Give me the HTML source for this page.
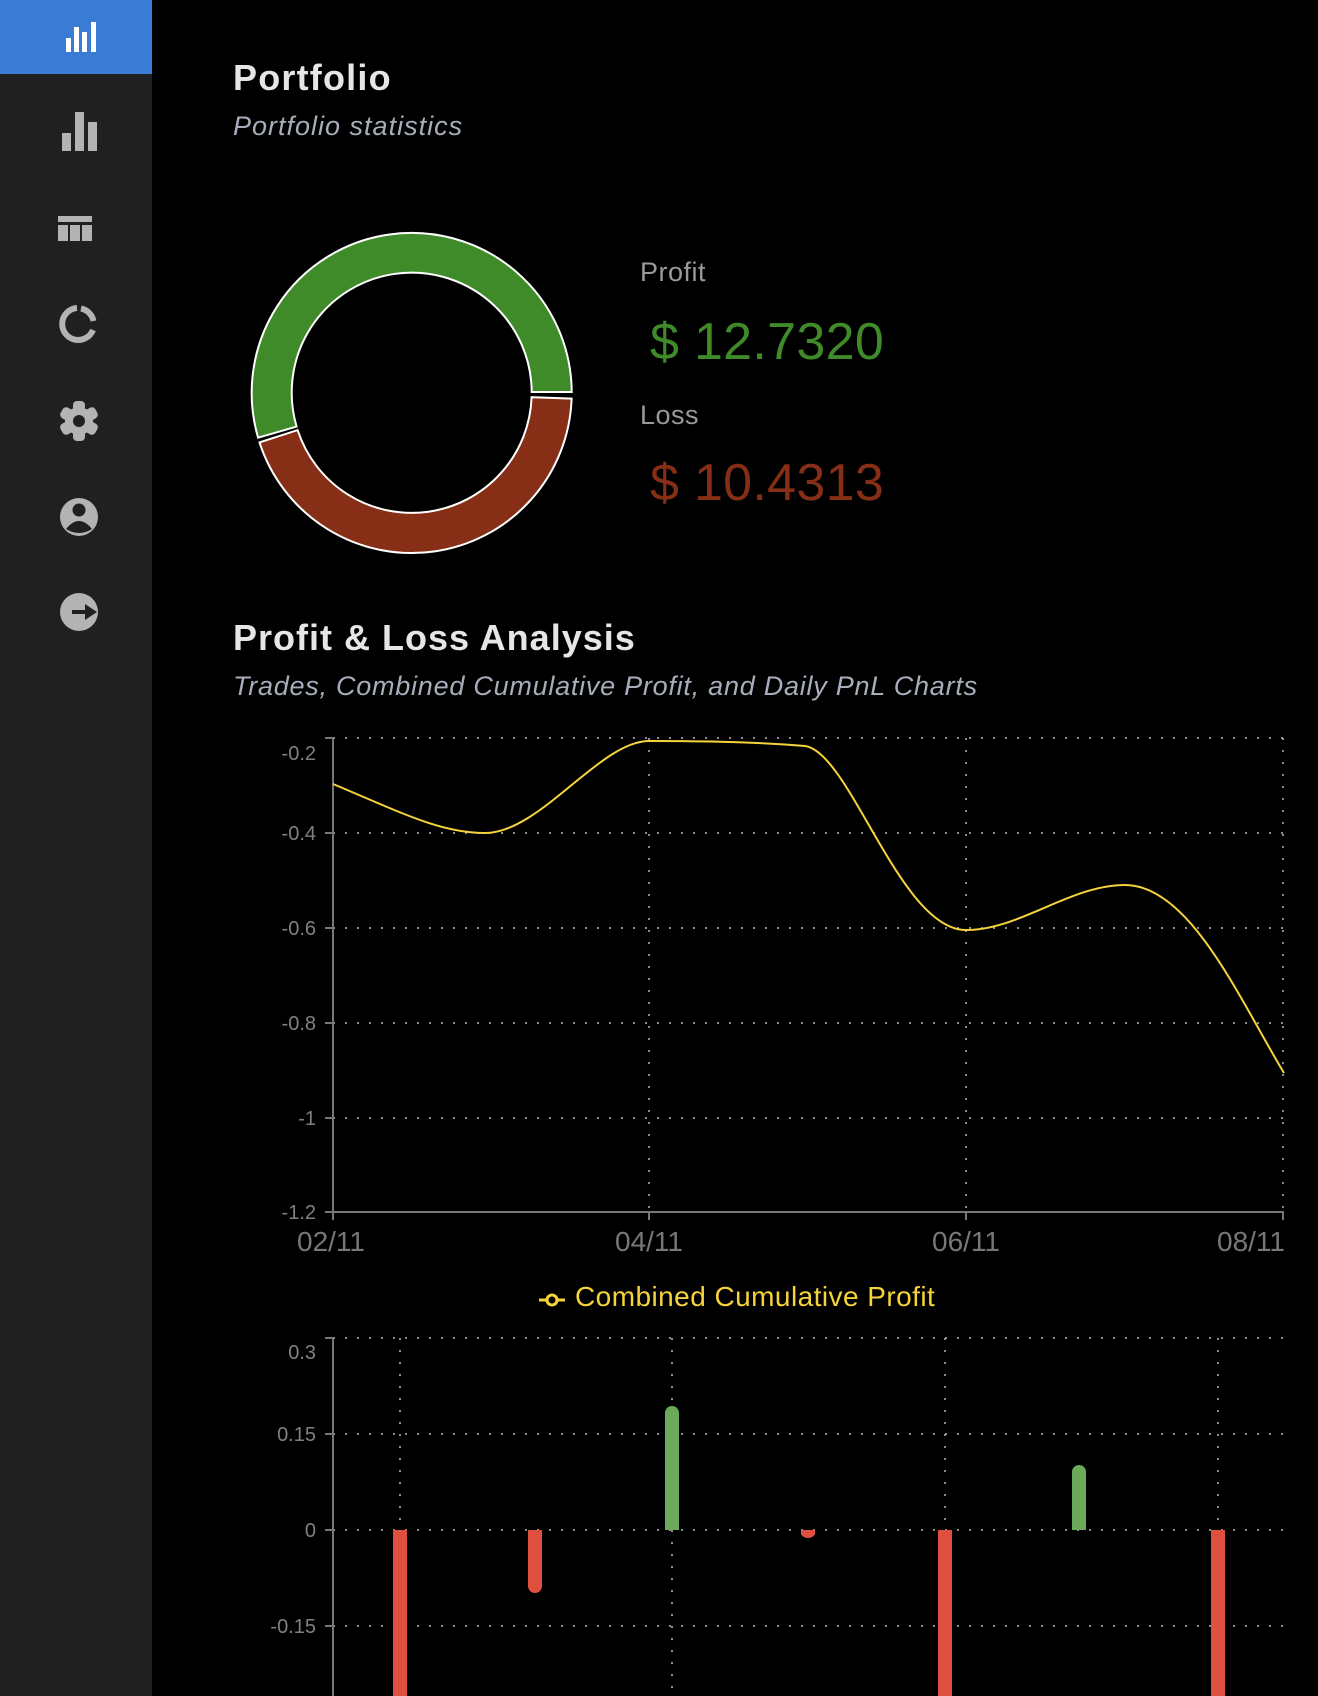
<!DOCTYPE html>
<html><head><meta charset="utf-8"><style>
html,body{margin:0;padding:0;background:#000;width:1318px;height:1696px;overflow:hidden;font-family:"Liberation Sans",sans-serif}
.sb{position:absolute;left:0;top:0;width:152px;height:1696px;background:#202020}
.act{position:absolute;left:0;top:0;width:152px;height:74px;background:#3a7bd5}
.t{position:absolute;white-space:nowrap}
</style></head><body>
<div class="sb"><div class="act"></div>
<svg width="152" height="700" style="position:absolute;left:0;top:0">
 <g fill="#fff"><rect x="66" y="38" width="5" height="14"/><rect x="74" y="27" width="5" height="25"/><rect x="82" y="32" width="5" height="20"/><rect x="91" y="22" width="5" height="30"/></g>
 <g fill="#b3b3b3">
  <rect x="62" y="133" width="9" height="18"/><rect x="75" y="112" width="9" height="39"/><rect x="88" y="122" width="9" height="29"/>
  <rect x="58" y="216" width="34" height="6"/><rect x="58" y="225" width="10" height="16"/><rect x="70" y="225" width="10" height="16"/><rect x="82" y="225" width="10" height="16"/>
 </g>
 <g fill="none" stroke="#b3b3b3" stroke-width="6">
  <path d="M77 308 A16 16 0 1 0 93 330"/><path d="M81 308.5 A16 16 0 0 1 93.5 321"/>
 </g>
 <g fill="#b3b3b3">
  <g transform="translate(79 421)">
   <circle r="14"/>
   <rect x="-6" y="-20" width="12" height="40" rx="4"/>
   <rect x="-6" y="-20" width="12" height="40" rx="4" transform="rotate(60)"/>
   <rect x="-6" y="-20" width="12" height="40" rx="4" transform="rotate(120)"/>
   <circle r="6" fill="#202020"/>
  </g>
  <circle cx="79" cy="517" r="19"/><circle cx="79" cy="510" r="6.5" fill="#202020"/><path d="M66 529 Q79 513 92 529 Q79 537 66 529 Z" fill="#202020"/>
  <circle cx="79" cy="612" r="19"/><rect x="72" y="610" width="14" height="4" fill="#202020"/><path d="M85 604 L97 612 L85 620 Z" fill="#202020"/>
 </g>
</svg></div>

<div class="t" style="left:233px;top:57px;font-size:36px;font-weight:bold;color:#e6e6e6;letter-spacing:1.2px">Portfolio</div>
<div class="t" style="left:233px;top:111px;font-size:27px;font-style:italic;color:#a8adbb;letter-spacing:1px">Portfolio statistics</div>
<div class="t" style="left:640px;top:257px;font-size:27px;color:#9a9a9a;letter-spacing:0.5px">Profit</div>
<div class="t" style="left:650px;top:312px;font-size:52px;color:#3f8a29;letter-spacing:0.3px">$ 12.7320</div>
<div class="t" style="left:640px;top:400px;font-size:27px;color:#9a9a9a;letter-spacing:0.5px">Loss</div>
<div class="t" style="left:650px;top:453px;font-size:52px;color:#862e16;letter-spacing:0.3px">$ 10.4313</div>
<div class="t" style="left:233px;top:617px;font-size:36px;font-weight:bold;color:#e6e6e6;letter-spacing:1px">Profit &amp; Loss Analysis</div>
<div class="t" style="left:233px;top:671px;font-size:27px;font-style:italic;color:#a8adbb;letter-spacing:0.75px">Trades, Combined Cumulative Profit, and Daily PnL Charts</div>

<svg width="1318" height="1696" style="position:absolute;left:0;top:0;pointer-events:none">
 <path d="M571.7 392 A160 160 0 1 0 258.1 437.7 L296.6 426.6 A120 120 0 1 1 531.7 392 Z" fill="#3f8a29" stroke="#fff" stroke-width="2"/>
 <path d="M571.6 398.6 A160 160 0 0 1 259.5 442.4 L297.6 430.1 A120 120 0 0 0 531.6 397.2 Z" fill="#862e16" stroke="#fff" stroke-width="2"/>

 <g stroke="#bbb" stroke-width="1.5" stroke-dasharray="2 10">
  <line x1="333" y1="738" x2="1284" y2="738"/><line x1="333" y1="833" x2="1284" y2="833"/><line x1="333" y1="928" x2="1284" y2="928"/>
  <line x1="333" y1="1023" x2="1284" y2="1023"/><line x1="333" y1="1118" x2="1284" y2="1118"/>
  <line x1="649" y1="738" x2="649" y2="1212"/><line x1="966" y1="738" x2="966" y2="1212"/><line x1="1283" y1="738" x2="1283" y2="1212"/>
 </g>
 <g stroke="#777" stroke-width="2">
  <line x1="333" y1="738" x2="333" y2="1220"/><line x1="325" y1="1212" x2="1284" y2="1212"/>
  <line x1="325" y1="738" x2="333" y2="738"/><line x1="325" y1="833" x2="333" y2="833"/><line x1="325" y1="928" x2="333" y2="928"/><line x1="325" y1="1023" x2="333" y2="1023"/><line x1="325" y1="1118" x2="333" y2="1118"/>
  <line x1="649" y1="1212" x2="649" y2="1220"/><line x1="966" y1="1212" x2="966" y2="1220"/><line x1="1283" y1="1212" x2="1283" y2="1220"/>
 </g>
 <g fill="#808080" font-size="20" text-anchor="end" font-family="Liberation Sans,sans-serif">
  <text x="316" y="760">-0.2</text><text x="316" y="840">-0.4</text><text x="316" y="935">-0.6</text><text x="316" y="1030">-0.8</text><text x="316" y="1125">-1</text><text x="316" y="1219">-1.2</text>
 </g>
 <g fill="#777" font-size="28" text-anchor="middle" font-family="Liberation Sans,sans-serif">
  <text x="331" y="1251">02/11</text><text x="649" y="1251">04/11</text><text x="966" y="1251">06/11</text><text x="1285" y="1251" text-anchor="end">08/11</text>
 </g>
 <path d="M333 784 C400 812 440 833 485 833 C540 833 600 741 649 741 C700 741 760 742 805 746 C850 752 900 930 966 930 C1020 930 1070 885 1125 885 C1190 885 1240 1000 1284 1073" fill="none" stroke="#f5d33a" stroke-width="2"/>
 <line x1="539" y1="1300" x2="565" y2="1300" stroke="#f5d33a" stroke-width="3"/><circle cx="552" cy="1300" r="5" fill="#000" stroke="#f5d33a" stroke-width="3"/>
 <text x="575" y="1306" fill="#f5d33a" font-size="28" font-family="Liberation Sans,sans-serif" letter-spacing="0.45">Combined Cumulative Profit</text>

 <g stroke="#bbb" stroke-width="1.5" stroke-dasharray="2 10">
  <line x1="333" y1="1338" x2="1284" y2="1338"/><line x1="333" y1="1434" x2="1284" y2="1434"/><line x1="333" y1="1530" x2="1284" y2="1530"/><line x1="333" y1="1626" x2="1284" y2="1626"/>
  <line x1="400" y1="1338" x2="400" y2="1696"/><line x1="672" y1="1338" x2="672" y2="1696"/><line x1="945" y1="1338" x2="945" y2="1696"/><line x1="1218" y1="1338" x2="1218" y2="1696"/>
 </g>
 <g stroke="#777" stroke-width="2">
  <line x1="333" y1="1338" x2="333" y2="1696"/>
  <line x1="325" y1="1338" x2="333" y2="1338"/><line x1="325" y1="1434" x2="333" y2="1434"/><line x1="325" y1="1530" x2="333" y2="1530"/><line x1="325" y1="1626" x2="333" y2="1626"/>
 </g>
 <g fill="#808080" font-size="20" text-anchor="end" font-family="Liberation Sans,sans-serif">
  <text x="316" y="1359">0.3</text><text x="316" y="1441">0.15</text><text x="316" y="1537">0</text><text x="316" y="1633">-0.15</text>
 </g>
 <g fill="#e05040">
  <rect x="393" y="1530" width="14" height="170"/>
  <path d="M528 1530 h14 v56 a7 7 0 0 1 -14 0 z"/>
  <path d="M801 1530 h14 v3 a7 5 0 0 1 -14 0 z"/>
  <rect x="938" y="1530" width="14" height="170"/>
  <rect x="1211" y="1530" width="14" height="170"/>
 </g>
 <g fill="#6aaa5a">
  <path d="M665 1530 v-117 a7 7 0 0 1 14 0 v117 z"/>
  <path d="M1072 1530 v-58 a7 7 0 0 1 14 0 v58 z"/>
 </g>
</svg>
</body></html>
